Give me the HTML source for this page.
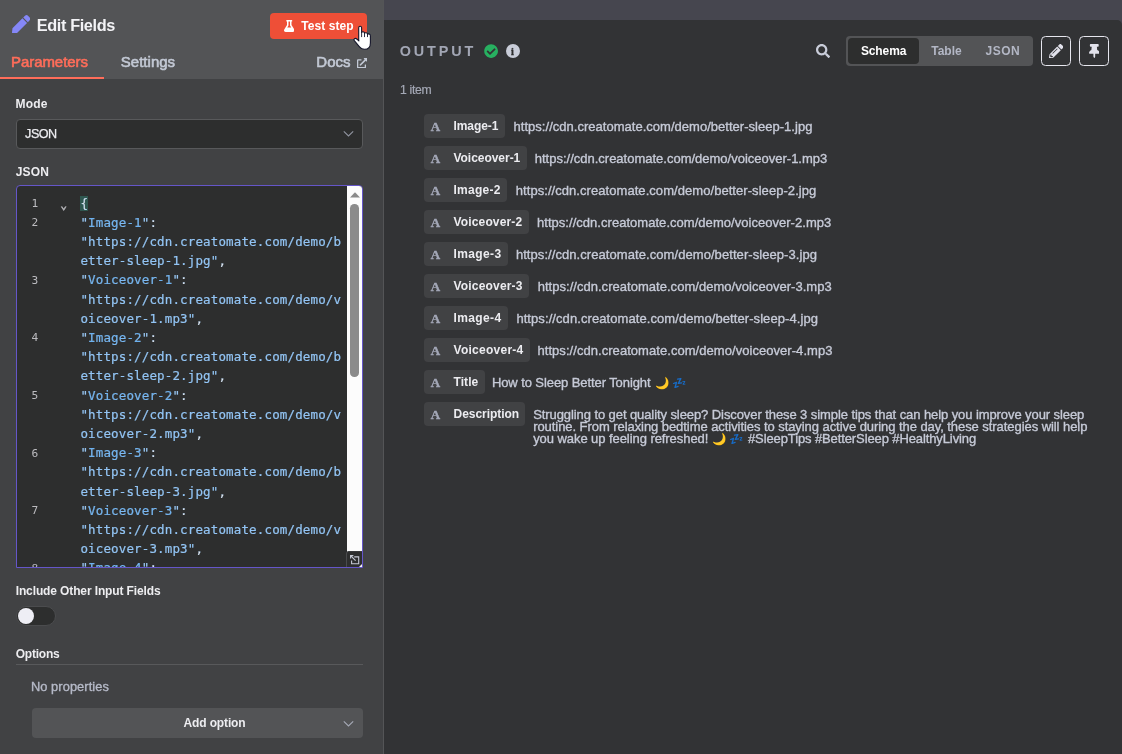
<!DOCTYPE html>
<html lang="en">
<head>
<meta charset="utf-8">
<title>Edit Fields</title>
<style>
*{box-sizing:border-box;margin:0;padding:0}
html,body{width:1122px;height:754px;overflow:hidden;background:#323335;font-family:"Liberation Sans",sans-serif;color:#e6e6e6}
body{position:relative}
.a,.t,svg{position:absolute}
.t{white-space:nowrap}
.code .t{white-space:pre}
</style>
</head>
<body>
<div class="a" style="left:0;top:0;width:1122px;height:754px;will-change:transform">

<div class="a" style="left:0;top:0;width:1122px;height:30px;background:#46464f"></div>
<div class="a" style="left:384px;top:20px;width:738px;height:734px;background:#323335;border-top-right-radius:5px"></div>
<div class="a" style="left:0;top:0;width:384px;height:754px;background:#414244;border-right:1px solid #545557"></div>
<div class="a" style="left:0;top:0;width:383px;height:79px;background:#535456"></div>
<svg style="left:11.7px;top:14.9px" width="18.4" height="18.4" viewBox="0 0 512 512"><path fill="#8587f7" d="M290.74 93.24l128.02 128.02-277.99 277.99-114.14 12.6C11.35 513.54-1.56 500.62.14 485.34l12.7-114.22 277.9-277.88zm207.2-19.06l-60.11-60.11c-18.75-18.75-49.16-18.75-67.91 0l-56.55 56.55 128.02 128.02 56.55-56.55c18.75-18.76 18.75-49.16 0-67.91z"/></svg>
<div class="t" style="left:36.70px;top:16.90px;font-size:16.3px;line-height:16.3px;color:#f3f3f6;font-weight:700;letter-spacing:-0.367px;">Edit Fields</div>
<div class="a" style="left:270px;top:13px;width:97px;height:26px;background:#ee4f37;border-radius:4px"></div>
<svg style="left:283.8px;top:19.9px" width="10.5" height="12" viewBox="0 0 448 512"><path fill="#fff" d="M437.2 403.5L320 215V64h8c13.3 0 24-10.7 24-24V24c0-13.3-10.7-24-24-24H120c-13.3 0-24 10.7-24 24v16c0 13.3 10.7 24 24 24h8v151L10.8 403.5C-18.500 450.600 15.300 512 70.900 512h306.200c55.700 0 89.400-61.500 60.100-108.500zM137.900 320l48.200-77.600c3.700-5.200 5.800-11.600 5.800-18.400V64h64v160c0 6.900 2.200 13.200 5.800 18.400l48.200 77.600h-172z"/></svg>
<div class="t" style="left:301.20px;top:19.90px;font-size:12px;line-height:12px;color:#fff;font-weight:700;letter-spacing:0.08px;">Test step</div>
<div class="t" style="left:11.10px;top:53.90px;font-size:15px;line-height:15px;color:#ff6d5a;letter-spacing:-0.081px;-webkit-text-stroke:0.6px #ff6d5a;">Parameters</div>
<div class="t" style="left:120.80px;top:53.90px;font-size:15px;line-height:15px;color:#c3c9d5;letter-spacing:0.014px;-webkit-text-stroke:0.6px #c3c9d5;">Settings</div>
<div class="t" style="left:316.30px;top:53.90px;font-size:15px;line-height:15px;color:#c3c9d5;letter-spacing:0.042px;-webkit-text-stroke:0.6px #c3c9d5;">Docs</div>
<svg style="left:356.8px;top:57.8px" width="10.3" height="10.3" viewBox="0 0 512 512"><path fill="#c3c9d5" d="M432,320H400a16,16,0,0,0-16,16V448H64V128H208a16,16,0,0,0,16-16V80a16,16,0,0,0-16-16H48A48,48,0,0,0,0,112V464a48,48,0,0,0,48,48H400a48,48,0,0,0,48-48V336A16,16,0,0,0,432,320ZM488,0h-128c-21.37,0-32.05,25.91-17,41l35.73,35.73L135,320.37a24,24,0,0,0,0,34L157.67,377a24,24,0,0,0,34,0L435.28,133.32,471,169c15,15,41,4.5,41-17V24A24,24,0,0,0,488,0Z"/></svg>
<div class="a" style="left:0;top:77px;width:104px;height:2px;background:#ff6d5a"></div>
<div class="t" style="left:15.60px;top:98.20px;font-size:12px;line-height:12px;color:#ededf0;font-weight:700;letter-spacing:0.181px;">Mode</div>
<div class="a" style="left:16px;top:119px;width:347px;height:30px;background:#2d2e2e;border:1px solid #58595b;border-radius:4px"></div>
<div class="t" style="left:25.12px;top:128.20px;font-size:12.6px;line-height:12.6px;color:#eeeef2;letter-spacing:-0.514px;-webkit-text-stroke:0.25px #eeeef2;">JSON</div>
<svg style="left:342.6px;top:130.1px" width="11" height="8" viewBox="0 0 11 8" fill="none" stroke="#9094a0" stroke-width="1.1"><path d="M0.800 1.300L5.500 6L10.200 1.300"/></svg>
<div class="t" style="left:15.70px;top:166.10px;font-size:12px;line-height:12px;color:#ededf0;font-weight:700;letter-spacing:0.163px;">JSON</div>
<div class="a" style="left:16px;top:185px;width:347px;height:383px;background:#2d2e2e;border:1px solid #6556c9;border-radius:4px 4px 0 0;overflow:hidden">
<div class="a code" style="left:-17px;top:-186px;width:400px;height:600px">
<div class="a" style="left:80.0px;top:196.1px;width:8.0px;height:14.8px;background:#2f5750"></div>
<div class="t" style="left:31.40px;top:197.90px;font-size:11.2px;line-height:11.2px;color:#bcbcc0;font-family:'DejaVu Sans Mono','Liberation Mono',monospace;">1</div>
<div class="t" style="left:80.40px;top:197.60px;font-size:12.5px;line-height:12.5px;color:#93c5f5;letter-spacing:0.144px;-webkit-text-stroke:0.2px #93c5f5;font-family:'DejaVu Sans Mono','Liberation Mono',monospace;"><span style="color:#e4e4e6">{</span></div>
<div class="t" style="left:31.40px;top:217.10px;font-size:11.2px;line-height:11.2px;color:#bcbcc0;font-family:'DejaVu Sans Mono','Liberation Mono',monospace;">2</div>
<div class="t" style="left:80.40px;top:216.80px;font-size:12.5px;line-height:12.5px;color:#93c5f5;letter-spacing:0.144px;-webkit-text-stroke:0.2px #93c5f5;font-family:'DejaVu Sans Mono','Liberation Mono',monospace;"><span style="color:#9cc9f3">"</span><span style="color:#6bb1f0">Image-1</span><span style="color:#9cc9f3">"</span><span style="color:#e4e4e6">:</span></div>
<div class="t" style="left:80.40px;top:236.00px;font-size:12.5px;line-height:12.5px;color:#93c5f5;letter-spacing:0.144px;-webkit-text-stroke:0.2px #93c5f5;font-family:'DejaVu Sans Mono','Liberation Mono',monospace;"><span style="color:#93c5f5">"https://cdn.creatomate.com/demo/b</span></div>
<div class="t" style="left:80.40px;top:255.20px;font-size:12.5px;line-height:12.5px;color:#93c5f5;letter-spacing:0.144px;-webkit-text-stroke:0.2px #93c5f5;font-family:'DejaVu Sans Mono','Liberation Mono',monospace;"><span style="color:#93c5f5">etter-sleep-1.jpg"</span><span style="color:#e4e4e6">,</span></div>
<div class="t" style="left:31.40px;top:274.70px;font-size:11.2px;line-height:11.2px;color:#bcbcc0;font-family:'DejaVu Sans Mono','Liberation Mono',monospace;">3</div>
<div class="t" style="left:80.40px;top:274.40px;font-size:12.5px;line-height:12.5px;color:#93c5f5;letter-spacing:0.144px;-webkit-text-stroke:0.2px #93c5f5;font-family:'DejaVu Sans Mono','Liberation Mono',monospace;"><span style="color:#9cc9f3">"</span><span style="color:#6bb1f0">Voiceover-1</span><span style="color:#9cc9f3">"</span><span style="color:#e4e4e6">:</span></div>
<div class="t" style="left:80.40px;top:293.60px;font-size:12.5px;line-height:12.5px;color:#93c5f5;letter-spacing:0.144px;-webkit-text-stroke:0.2px #93c5f5;font-family:'DejaVu Sans Mono','Liberation Mono',monospace;"><span style="color:#93c5f5">"https://cdn.creatomate.com/demo/v</span></div>
<div class="t" style="left:80.40px;top:312.80px;font-size:12.5px;line-height:12.5px;color:#93c5f5;letter-spacing:0.144px;-webkit-text-stroke:0.2px #93c5f5;font-family:'DejaVu Sans Mono','Liberation Mono',monospace;"><span style="color:#93c5f5">oiceover-1.mp3"</span><span style="color:#e4e4e6">,</span></div>
<div class="t" style="left:31.40px;top:332.30px;font-size:11.2px;line-height:11.2px;color:#bcbcc0;font-family:'DejaVu Sans Mono','Liberation Mono',monospace;">4</div>
<div class="t" style="left:80.40px;top:332.00px;font-size:12.5px;line-height:12.5px;color:#93c5f5;letter-spacing:0.144px;-webkit-text-stroke:0.2px #93c5f5;font-family:'DejaVu Sans Mono','Liberation Mono',monospace;"><span style="color:#9cc9f3">"</span><span style="color:#6bb1f0">Image-2</span><span style="color:#9cc9f3">"</span><span style="color:#e4e4e6">:</span></div>
<div class="t" style="left:80.40px;top:351.20px;font-size:12.5px;line-height:12.5px;color:#93c5f5;letter-spacing:0.144px;-webkit-text-stroke:0.2px #93c5f5;font-family:'DejaVu Sans Mono','Liberation Mono',monospace;"><span style="color:#93c5f5">"https://cdn.creatomate.com/demo/b</span></div>
<div class="t" style="left:80.40px;top:370.40px;font-size:12.5px;line-height:12.5px;color:#93c5f5;letter-spacing:0.144px;-webkit-text-stroke:0.2px #93c5f5;font-family:'DejaVu Sans Mono','Liberation Mono',monospace;"><span style="color:#93c5f5">etter-sleep-2.jpg"</span><span style="color:#e4e4e6">,</span></div>
<div class="t" style="left:31.40px;top:389.90px;font-size:11.2px;line-height:11.2px;color:#bcbcc0;font-family:'DejaVu Sans Mono','Liberation Mono',monospace;">5</div>
<div class="t" style="left:80.40px;top:389.60px;font-size:12.5px;line-height:12.5px;color:#93c5f5;letter-spacing:0.144px;-webkit-text-stroke:0.2px #93c5f5;font-family:'DejaVu Sans Mono','Liberation Mono',monospace;"><span style="color:#9cc9f3">"</span><span style="color:#6bb1f0">Voiceover-2</span><span style="color:#9cc9f3">"</span><span style="color:#e4e4e6">:</span></div>
<div class="t" style="left:80.40px;top:408.80px;font-size:12.5px;line-height:12.5px;color:#93c5f5;letter-spacing:0.144px;-webkit-text-stroke:0.2px #93c5f5;font-family:'DejaVu Sans Mono','Liberation Mono',monospace;"><span style="color:#93c5f5">"https://cdn.creatomate.com/demo/v</span></div>
<div class="t" style="left:80.40px;top:428.00px;font-size:12.5px;line-height:12.5px;color:#93c5f5;letter-spacing:0.144px;-webkit-text-stroke:0.2px #93c5f5;font-family:'DejaVu Sans Mono','Liberation Mono',monospace;"><span style="color:#93c5f5">oiceover-2.mp3"</span><span style="color:#e4e4e6">,</span></div>
<div class="t" style="left:31.40px;top:447.50px;font-size:11.2px;line-height:11.2px;color:#bcbcc0;font-family:'DejaVu Sans Mono','Liberation Mono',monospace;">6</div>
<div class="t" style="left:80.40px;top:447.20px;font-size:12.5px;line-height:12.5px;color:#93c5f5;letter-spacing:0.144px;-webkit-text-stroke:0.2px #93c5f5;font-family:'DejaVu Sans Mono','Liberation Mono',monospace;"><span style="color:#9cc9f3">"</span><span style="color:#6bb1f0">Image-3</span><span style="color:#9cc9f3">"</span><span style="color:#e4e4e6">:</span></div>
<div class="t" style="left:80.40px;top:466.40px;font-size:12.5px;line-height:12.5px;color:#93c5f5;letter-spacing:0.144px;-webkit-text-stroke:0.2px #93c5f5;font-family:'DejaVu Sans Mono','Liberation Mono',monospace;"><span style="color:#93c5f5">"https://cdn.creatomate.com/demo/b</span></div>
<div class="t" style="left:80.40px;top:485.60px;font-size:12.5px;line-height:12.5px;color:#93c5f5;letter-spacing:0.144px;-webkit-text-stroke:0.2px #93c5f5;font-family:'DejaVu Sans Mono','Liberation Mono',monospace;"><span style="color:#93c5f5">etter-sleep-3.jpg"</span><span style="color:#e4e4e6">,</span></div>
<div class="t" style="left:31.40px;top:505.10px;font-size:11.2px;line-height:11.2px;color:#bcbcc0;font-family:'DejaVu Sans Mono','Liberation Mono',monospace;">7</div>
<div class="t" style="left:80.40px;top:504.80px;font-size:12.5px;line-height:12.5px;color:#93c5f5;letter-spacing:0.144px;-webkit-text-stroke:0.2px #93c5f5;font-family:'DejaVu Sans Mono','Liberation Mono',monospace;"><span style="color:#9cc9f3">"</span><span style="color:#6bb1f0">Voiceover-3</span><span style="color:#9cc9f3">"</span><span style="color:#e4e4e6">:</span></div>
<div class="t" style="left:80.40px;top:524.00px;font-size:12.5px;line-height:12.5px;color:#93c5f5;letter-spacing:0.144px;-webkit-text-stroke:0.2px #93c5f5;font-family:'DejaVu Sans Mono','Liberation Mono',monospace;"><span style="color:#93c5f5">"https://cdn.creatomate.com/demo/v</span></div>
<div class="t" style="left:80.40px;top:543.20px;font-size:12.5px;line-height:12.5px;color:#93c5f5;letter-spacing:0.144px;-webkit-text-stroke:0.2px #93c5f5;font-family:'DejaVu Sans Mono','Liberation Mono',monospace;"><span style="color:#93c5f5">oiceover-3.mp3"</span><span style="color:#e4e4e6">,</span></div>
<div class="t" style="left:31.40px;top:562.70px;font-size:11.2px;line-height:11.2px;color:#bcbcc0;font-family:'DejaVu Sans Mono','Liberation Mono',monospace;">8</div>
<div class="t" style="left:80.40px;top:562.40px;font-size:12.5px;line-height:12.5px;color:#93c5f5;letter-spacing:0.144px;-webkit-text-stroke:0.2px #93c5f5;font-family:'DejaVu Sans Mono','Liberation Mono',monospace;"><span style="color:#9cc9f3">"</span><span style="color:#6bb1f0">Image-4</span><span style="color:#9cc9f3">"</span><span style="color:#e4e4e6">:</span></div>
<div class="t" style="left:60.45px;top:199.90px;font-size:10.6px;line-height:10.6px;color:#b0b0b4;-webkit-text-stroke:0.55px #b0b0b4;font-family:'DejaVu Sans Mono','Liberation Mono',monospace;">⌄</div>
</div>
<div class="a" style="left:330px;top:0;width:15px;height:366px;background:#fcfcfc"></div>
<svg style="left:333px;top:6px" width="10" height="6" viewBox="0 0 10 6"><path d="M0 5.500L5 0.300L10 5.500z" fill="#8a8a8a"/></svg>
<div class="a" style="left:333.3px;top:18px;width:8.600px;height:173px;background:#8b8b8b;border-radius:4.3px"></div>
<div class="a" style="left:329px;top:365px;width:17px;height:17px;background:#2d2e2e;border-left:1px solid #4a4b4d;border-top:1px solid #3a3b3d;border-top-left-radius:3px"></div>
<svg style="left:333px;top:369px" width="10" height="10" viewBox="0 0 10 10" fill="none" stroke="#c6cad6" stroke-width="1.100"><path d="M4.200 1.900H8.700V8.700H1.600V5.600"/><path d="M0.600 0.600L5.600 5.600"/><path d="M0.600 3.400V0.600H3.400"/></svg>
<svg style="left:342px;top:378px" width="3" height="3" viewBox="0 0 3 3"><path d="M3 0V3H0z" fill="#f4f4f4"/></svg>
</div>
<div class="t" style="left:15.70px;top:585.30px;font-size:12px;line-height:12px;color:#ededf0;font-weight:700;letter-spacing:-0.121px;">Include Other Input Fields</div>
<div class="a" style="left:16px;top:606px;width:40px;height:20px;border-radius:10px;background:#2d2e2e;border:1px solid #4b4c4e"></div>
<div class="a" style="left:18px;top:608px;width:16px;height:16px;border-radius:8px;background:#eeeef5"></div>
<div class="t" style="left:15.70px;top:648.20px;font-size:12px;line-height:12px;color:#ededf0;font-weight:700;letter-spacing:-0.226px;">Options</div>
<div class="a" style="left:16px;top:664px;width:347px;height:1px;background:#58595b"></div>
<div class="t" style="left:30.88px;top:681.20px;font-size:12.8px;line-height:12.8px;color:#b6bac8;letter-spacing:0.102px;-webkit-text-stroke:0.35px #b6bac8;">No properties</div>
<div class="a" style="left:32px;top:708px;width:331px;height:30px;background:#535456;border-radius:4px"></div>
<div class="t" style="left:183.60px;top:717.10px;font-size:12px;line-height:12px;color:#ededf0;font-weight:700;letter-spacing:-0.142px;">Add option</div>
<svg style="left:342.500px;top:719.700px" width="11" height="8" viewBox="0 0 11 8" fill="none" stroke="#a5a9b6" stroke-width="1.100"><path d="M0.800 1.300L5.500 6L10.200 1.300"/></svg>
<div class="t" style="left:399.80px;top:44.10px;font-size:14.4px;line-height:14.4px;color:#a2a6b4;font-weight:700;letter-spacing:2.867px;">OUTPUT</div>
<svg style="left:484px;top:44px" width="14.200" height="14.200" viewBox="0 0 512 512"><path fill="#27b060" d="M504 256c0 136.967-111.033 248-248 248S8 392.967 8 256 119.033 8 256 8s248 111.033 248 248zM227.314 387.314l184-184c6.248-6.248 6.248-16.379 0-22.627l-22.627-22.627c-6.248-6.249-16.379-6.249-22.628 0L216 308.118l-70.059-70.059c-6.248-6.248-16.379-6.248-22.628 0l-22.627 22.627c-6.248 6.248-6.248 16.379 0 22.627l104 104c6.249 6.249 16.379 6.249 22.628.001z"/></svg>
<div class="a" style="left:505.800px;top:44px;width:14px;height:14px;border-radius:7px;background:#c9cdd9"></div>
<div class="t" style="left:511.10px;top:46.70px;font-size:10.2px;line-height:10.2px;color:#2d2e2e;font-weight:700;-webkit-text-stroke:0.3px #2d2e2e;font-family:'Liberation Serif',serif;">i</div>
<div class="t" style="left:400.00px;top:84.10px;font-size:12.2px;line-height:12.2px;color:#a5a9b6;letter-spacing:-0.287px;-webkit-text-stroke:0.2px #a5a9b6;">1 item</div>
<svg style="left:816px;top:44.400px" width="14" height="14" viewBox="0 0 512 512"><path fill="#c9cdd9" d="M505 442.700L405.300 343c-4.500-4.500-10.600-7-17-7H372c27.600-35.300 44-79.700 44-128C416 93.100 322.900 0 208 0S0 93.100 0 208s93.100 208 208 208c48.300 0 92.700-16.400 128-44v16.300c0 6.400 2.500 12.500 7 17l99.700 99.700c9.400 9.400 24.600 9.400 33.900 0l28.300-28.300c9.400-9.400 9.400-24.600.1-34zM208 336c-70.700 0-128-57.200-128-128 0-70.700 57.200-128 128-128 70.700 0 128 57.200 128 128 0 70.700-57.200 128-128 128z"/></svg>
<div class="a" style="left:846px;top:36px;width:187px;height:30px;background:#535456;border-radius:4px"></div>
<div class="a" style="left:848px;top:38px;width:71px;height:26px;background:#2d2e2e;border-radius:4px"></div>
<div class="t" style="left:860.90px;top:45.10px;font-size:12px;line-height:12px;color:#fff;font-weight:700;letter-spacing:-0.11px;">Schema</div>
<div class="t" style="left:931.20px;top:45.10px;font-size:12px;line-height:12px;color:#b3b7c5;font-weight:700;letter-spacing:0.006px;">Table</div>
<div class="t" style="left:985.60px;top:45.10px;font-size:12px;line-height:12px;color:#b3b7c5;font-weight:700;letter-spacing:0.429px;">JSON</div>
<div class="a" style="left:1041px;top:36px;width:30px;height:30px;border:1px solid #e6e6ee;border-radius:4.5px"></div>
<div class="a" style="left:1079px;top:36px;width:30px;height:30px;border:1px solid #e6e6ee;border-radius:4.5px"></div>
<svg style="left:1048.800px;top:43.800px" width="14.400" height="14.400" viewBox="0 0 512 512"><path fill="#e2e2ec" d="M497.900 142.100l-46.100 46.100c-4.700 4.700-12.300 4.700-17 0l-111-111c-4.700-4.700-4.700-12.300 0-17l46.100-46.100c18.700-18.700 49.100-18.700 67.900 0l60.100 60.100c18.800 18.700 18.800 49.100 0 67.900zM284.200 99.800L21.600 362.400.4 483.900c-2.900 16.400 11.400 30.600 27.800 27.800l121.500-21.300 262.600-262.600c4.700-4.700 4.700-12.300 0-17l-111-111c-4.800-4.700-12.400-4.700-17.100 0zM124.100 339.900c-5.500-5.500-5.500-14.300 0-19.800l154-154c5.500-5.500 14.300-5.500 19.800 0s5.500 14.300 0 19.800l-154 154c-5.500 5.500-14.300 5.500-19.800 0zM88 424h48v36.300l-64.500 11.300-31.100-31.100L51.700 376H88v48z"/></svg>
<svg style="left:1088.600px;top:44px" width="10.600" height="14.100" viewBox="0 0 384 512"><path fill="#e2e2ec" d="M298.028 214.267L285.793 96H328c13.255 0 24-10.745 24-24V24c0-13.255-10.745-24-24-24H56C42.745 0 32 10.745 32 24v48c0 13.255 10.745 24 24 24h42.207L85.972 214.267C37.465 236.820 0 277.261 0 328c0 13.255 10.745 24 24 24h136v104.007c0 1.242.289 2.467.845 3.578l24 48c2.941 5.882 11.364 5.893 14.311 0l24-48a8.008 8.008 0 0 0 .845-3.578V352h136c13.255 0 24-10.745 24-24-.001-51.183-37.983-91.420-85.973-113.733z"/></svg>
<div class="a" style="left:424px;top:114px;width:81.1px;height:24px;background:#414244;border-radius:4px"></div>
<div class="t" style="left:430.70px;top:119.80px;font-size:13.0px;line-height:13.0px;color:#a3a7b7;font-weight:700;-webkit-text-stroke:0.4px #a3a7b7;font-family:'Liberation Serif',serif;">A</div>
<div class="t" style="left:453.50px;top:120.40px;font-size:12px;line-height:12px;color:#ececf0;font-weight:700;letter-spacing:-0.08px;">Image-1</div>
<div class="t" style="left:513.58px;top:119.60px;font-size:13px;line-height:13px;color:#c6cad7;letter-spacing:0.022px;-webkit-text-stroke:0.35px #c6cad7;">https://cdn.creatomate.com/demo/better-sleep-1.jpg</div>
<div class="a" style="left:424px;top:146px;width:103.0px;height:24px;background:#414244;border-radius:4px"></div>
<div class="t" style="left:430.70px;top:151.80px;font-size:13.0px;line-height:13.0px;color:#a3a7b7;font-weight:700;-webkit-text-stroke:0.4px #a3a7b7;font-family:'Liberation Serif',serif;">A</div>
<div class="t" style="left:453.50px;top:152.40px;font-size:12px;line-height:12px;color:#ececf0;font-weight:700;letter-spacing:-0.037px;">Voiceover-1</div>
<div class="t" style="left:534.77px;top:151.60px;font-size:13px;line-height:13px;color:#c6cad7;letter-spacing:-0.003px;-webkit-text-stroke:0.35px #c6cad7;">https://cdn.creatomate.com/demo/voiceover-1.mp3</div>
<div class="a" style="left:424px;top:178px;width:83.1px;height:24px;background:#414244;border-radius:4px"></div>
<div class="t" style="left:430.70px;top:183.80px;font-size:13.0px;line-height:13.0px;color:#a3a7b7;font-weight:700;-webkit-text-stroke:0.4px #a3a7b7;font-family:'Liberation Serif',serif;">A</div>
<div class="t" style="left:453.50px;top:184.40px;font-size:12px;line-height:12px;color:#ececf0;font-weight:700;letter-spacing:0.254px;">Image-2</div>
<div class="t" style="left:515.77px;top:183.60px;font-size:13px;line-height:13px;color:#c6cad7;letter-spacing:0.057px;-webkit-text-stroke:0.35px #c6cad7;">https://cdn.creatomate.com/demo/better-sleep-2.jpg</div>
<div class="a" style="left:424px;top:210px;width:104.9px;height:24px;background:#414244;border-radius:4px"></div>
<div class="t" style="left:430.70px;top:215.80px;font-size:13.0px;line-height:13.0px;color:#a3a7b7;font-weight:700;-webkit-text-stroke:0.4px #a3a7b7;font-family:'Liberation Serif',serif;">A</div>
<div class="t" style="left:453.50px;top:216.40px;font-size:12px;line-height:12px;color:#ececf0;font-weight:700;letter-spacing:0.153px;">Voiceover-2</div>
<div class="t" style="left:536.98px;top:215.60px;font-size:13px;line-height:13px;color:#c6cad7;letter-spacing:0.036px;-webkit-text-stroke:0.35px #c6cad7;">https://cdn.creatomate.com/demo/voiceover-2.mp3</div>
<div class="a" style="left:424px;top:242px;width:83.8px;height:24px;background:#414244;border-radius:4px"></div>
<div class="t" style="left:430.70px;top:247.80px;font-size:13.0px;line-height:13.0px;color:#a3a7b7;font-weight:700;-webkit-text-stroke:0.4px #a3a7b7;font-family:'Liberation Serif',serif;">A</div>
<div class="t" style="left:453.50px;top:248.40px;font-size:12px;line-height:12px;color:#ececf0;font-weight:700;letter-spacing:0.37px;">Image-3</div>
<div class="t" style="left:515.88px;top:247.60px;font-size:13px;line-height:13px;color:#c6cad7;letter-spacing:0.069px;-webkit-text-stroke:0.35px #c6cad7;">https://cdn.creatomate.com/demo/better-sleep-3.jpg</div>
<div class="a" style="left:424px;top:274px;width:105.2px;height:24px;background:#414244;border-radius:4px"></div>
<div class="t" style="left:430.70px;top:279.80px;font-size:13.0px;line-height:13.0px;color:#a3a7b7;font-weight:700;-webkit-text-stroke:0.4px #a3a7b7;font-family:'Liberation Serif',serif;">A</div>
<div class="t" style="left:453.50px;top:280.40px;font-size:12px;line-height:12px;color:#ececf0;font-weight:700;letter-spacing:0.183px;">Voiceover-3</div>
<div class="t" style="left:537.67px;top:279.60px;font-size:13px;line-height:13px;color:#c6cad7;letter-spacing:0.031px;-webkit-text-stroke:0.35px #c6cad7;">https://cdn.creatomate.com/demo/voiceover-3.mp3</div>
<div class="a" style="left:424px;top:306px;width:83.9px;height:24px;background:#414244;border-radius:4px"></div>
<div class="t" style="left:430.70px;top:311.80px;font-size:13.0px;line-height:13.0px;color:#a3a7b7;font-weight:700;-webkit-text-stroke:0.4px #a3a7b7;font-family:'Liberation Serif',serif;">A</div>
<div class="t" style="left:453.50px;top:312.40px;font-size:12px;line-height:12px;color:#ececf0;font-weight:700;letter-spacing:0.387px;">Image-4</div>
<div class="t" style="left:516.38px;top:311.60px;font-size:13px;line-height:13px;color:#c6cad7;letter-spacing:0.079px;-webkit-text-stroke:0.35px #c6cad7;">https://cdn.creatomate.com/demo/better-sleep-4.jpg</div>
<div class="a" style="left:424px;top:338px;width:106.0px;height:24px;background:#414244;border-radius:4px"></div>
<div class="t" style="left:430.70px;top:343.80px;font-size:13.0px;line-height:13.0px;color:#a3a7b7;font-weight:700;-webkit-text-stroke:0.4px #a3a7b7;font-family:'Liberation Serif',serif;">A</div>
<div class="t" style="left:453.50px;top:344.40px;font-size:12px;line-height:12px;color:#ececf0;font-weight:700;letter-spacing:0.263px;">Voiceover-4</div>
<div class="t" style="left:537.48px;top:343.60px;font-size:13px;line-height:13px;color:#c6cad7;letter-spacing:0.051px;-webkit-text-stroke:0.35px #c6cad7;">https://cdn.creatomate.com/demo/voiceover-4.mp3</div>
<div class="a" style="left:424px;top:370px;width:61.0px;height:24px;background:#414244;border-radius:4px"></div>
<div class="t" style="left:430.70px;top:375.80px;font-size:13.0px;line-height:13.0px;color:#a3a7b7;font-weight:700;-webkit-text-stroke:0.4px #a3a7b7;font-family:'Liberation Serif',serif;">A</div>
<div class="t" style="left:453.50px;top:376.40px;font-size:12px;line-height:12px;color:#ececf0;font-weight:700;letter-spacing:0.081px;">Title</div>
<div class="t" style="left:491.88px;top:375.60px;font-size:13px;line-height:13px;color:#c6cad7;letter-spacing:-0.084px;-webkit-text-stroke:0.35px #c6cad7;">How to Sleep Better Tonight</div>
<div class="a" style="left:424px;top:402px;width:101.2px;height:24px;background:#414244;border-radius:4px"></div>
<div class="t" style="left:430.70px;top:407.80px;font-size:13.0px;line-height:13.0px;color:#a3a7b7;font-weight:700;-webkit-text-stroke:0.4px #a3a7b7;font-family:'Liberation Serif',serif;">A</div>
<div class="t" style="left:453.50px;top:408.40px;font-size:12px;line-height:12px;color:#ececf0;font-weight:700;letter-spacing:-0.038px;">Description</div>
<div class="t" style="left:655.40px;top:376.70px;font-size:11.6px;line-height:11.6px;color:#fff;">🌙</div>
<div class="t" style="left:672.20px;top:376.70px;font-size:11.6px;line-height:11.6px;color:#fff;">💤</div>
<div class="t" style="left:533.17px;top:407.80px;font-size:13px;line-height:13px;color:#c6cad7;letter-spacing:-0.084px;-webkit-text-stroke:0.35px #c6cad7;">Struggling to get quality sleep? Discover these 3 simple tips that can help you improve your sleep</div>
<div class="t" style="left:533.17px;top:419.80px;font-size:13px;line-height:13px;color:#c6cad7;letter-spacing:-0.062px;-webkit-text-stroke:0.35px #c6cad7;">routine. From relaxing bedtime activities to staying active during the day, these strategies will help</div>
<div class="t" style="left:533.17px;top:431.80px;font-size:13px;line-height:13px;color:#c6cad7;letter-spacing:-0.065px;-webkit-text-stroke:0.35px #c6cad7;">you wake up feeling refreshed!</div>
<div class="t" style="left:712.30px;top:432.60px;font-size:11.6px;line-height:11.6px;color:#fff;">🌙</div>
<div class="t" style="left:728.90px;top:432.60px;font-size:11.6px;line-height:11.6px;color:#fff;">💤</div>
<div class="t" style="left:747.97px;top:431.80px;font-size:13px;line-height:13px;color:#c6cad7;letter-spacing:-0.109px;-webkit-text-stroke:0.35px #c6cad7;">#SleepTips #BetterSleep #HealthyLiving</div>
<svg style="left:350px;top:22px" width="26" height="30" viewBox="350 22 26 30"><path d="M358.7 40.300V27.700Q358.700 26.300 360.150 26.300Q361.600 26.300 361.600 27.700V32.400Q362 31.700 363.100 31.800Q364.400 32 364.500 33.100Q365.200 32.600 366.200 32.800Q367.400 33.100 367.500 34.200Q368.200 33.700 369.200 34Q370.400 34.400 370.400 35.700V43Q370.400 49.300 364.600 49.300Q361.500 49.300 359.500 46.800L354.300 40.700Q353.400 39.500 354.400 38.700Q355.600 38 356.800 39L358.900 40.900Z" fill="#fff" stroke="#15162a" stroke-width="1.100" stroke-linejoin="round"/><path d="M361.600 32.400V36.700M364.500 33.200V36.700M367.500 34.300V36.700" stroke="#15162a" stroke-width="0.900" stroke-linecap="round" fill="none"/></svg>
</div>
</body>
</html>
